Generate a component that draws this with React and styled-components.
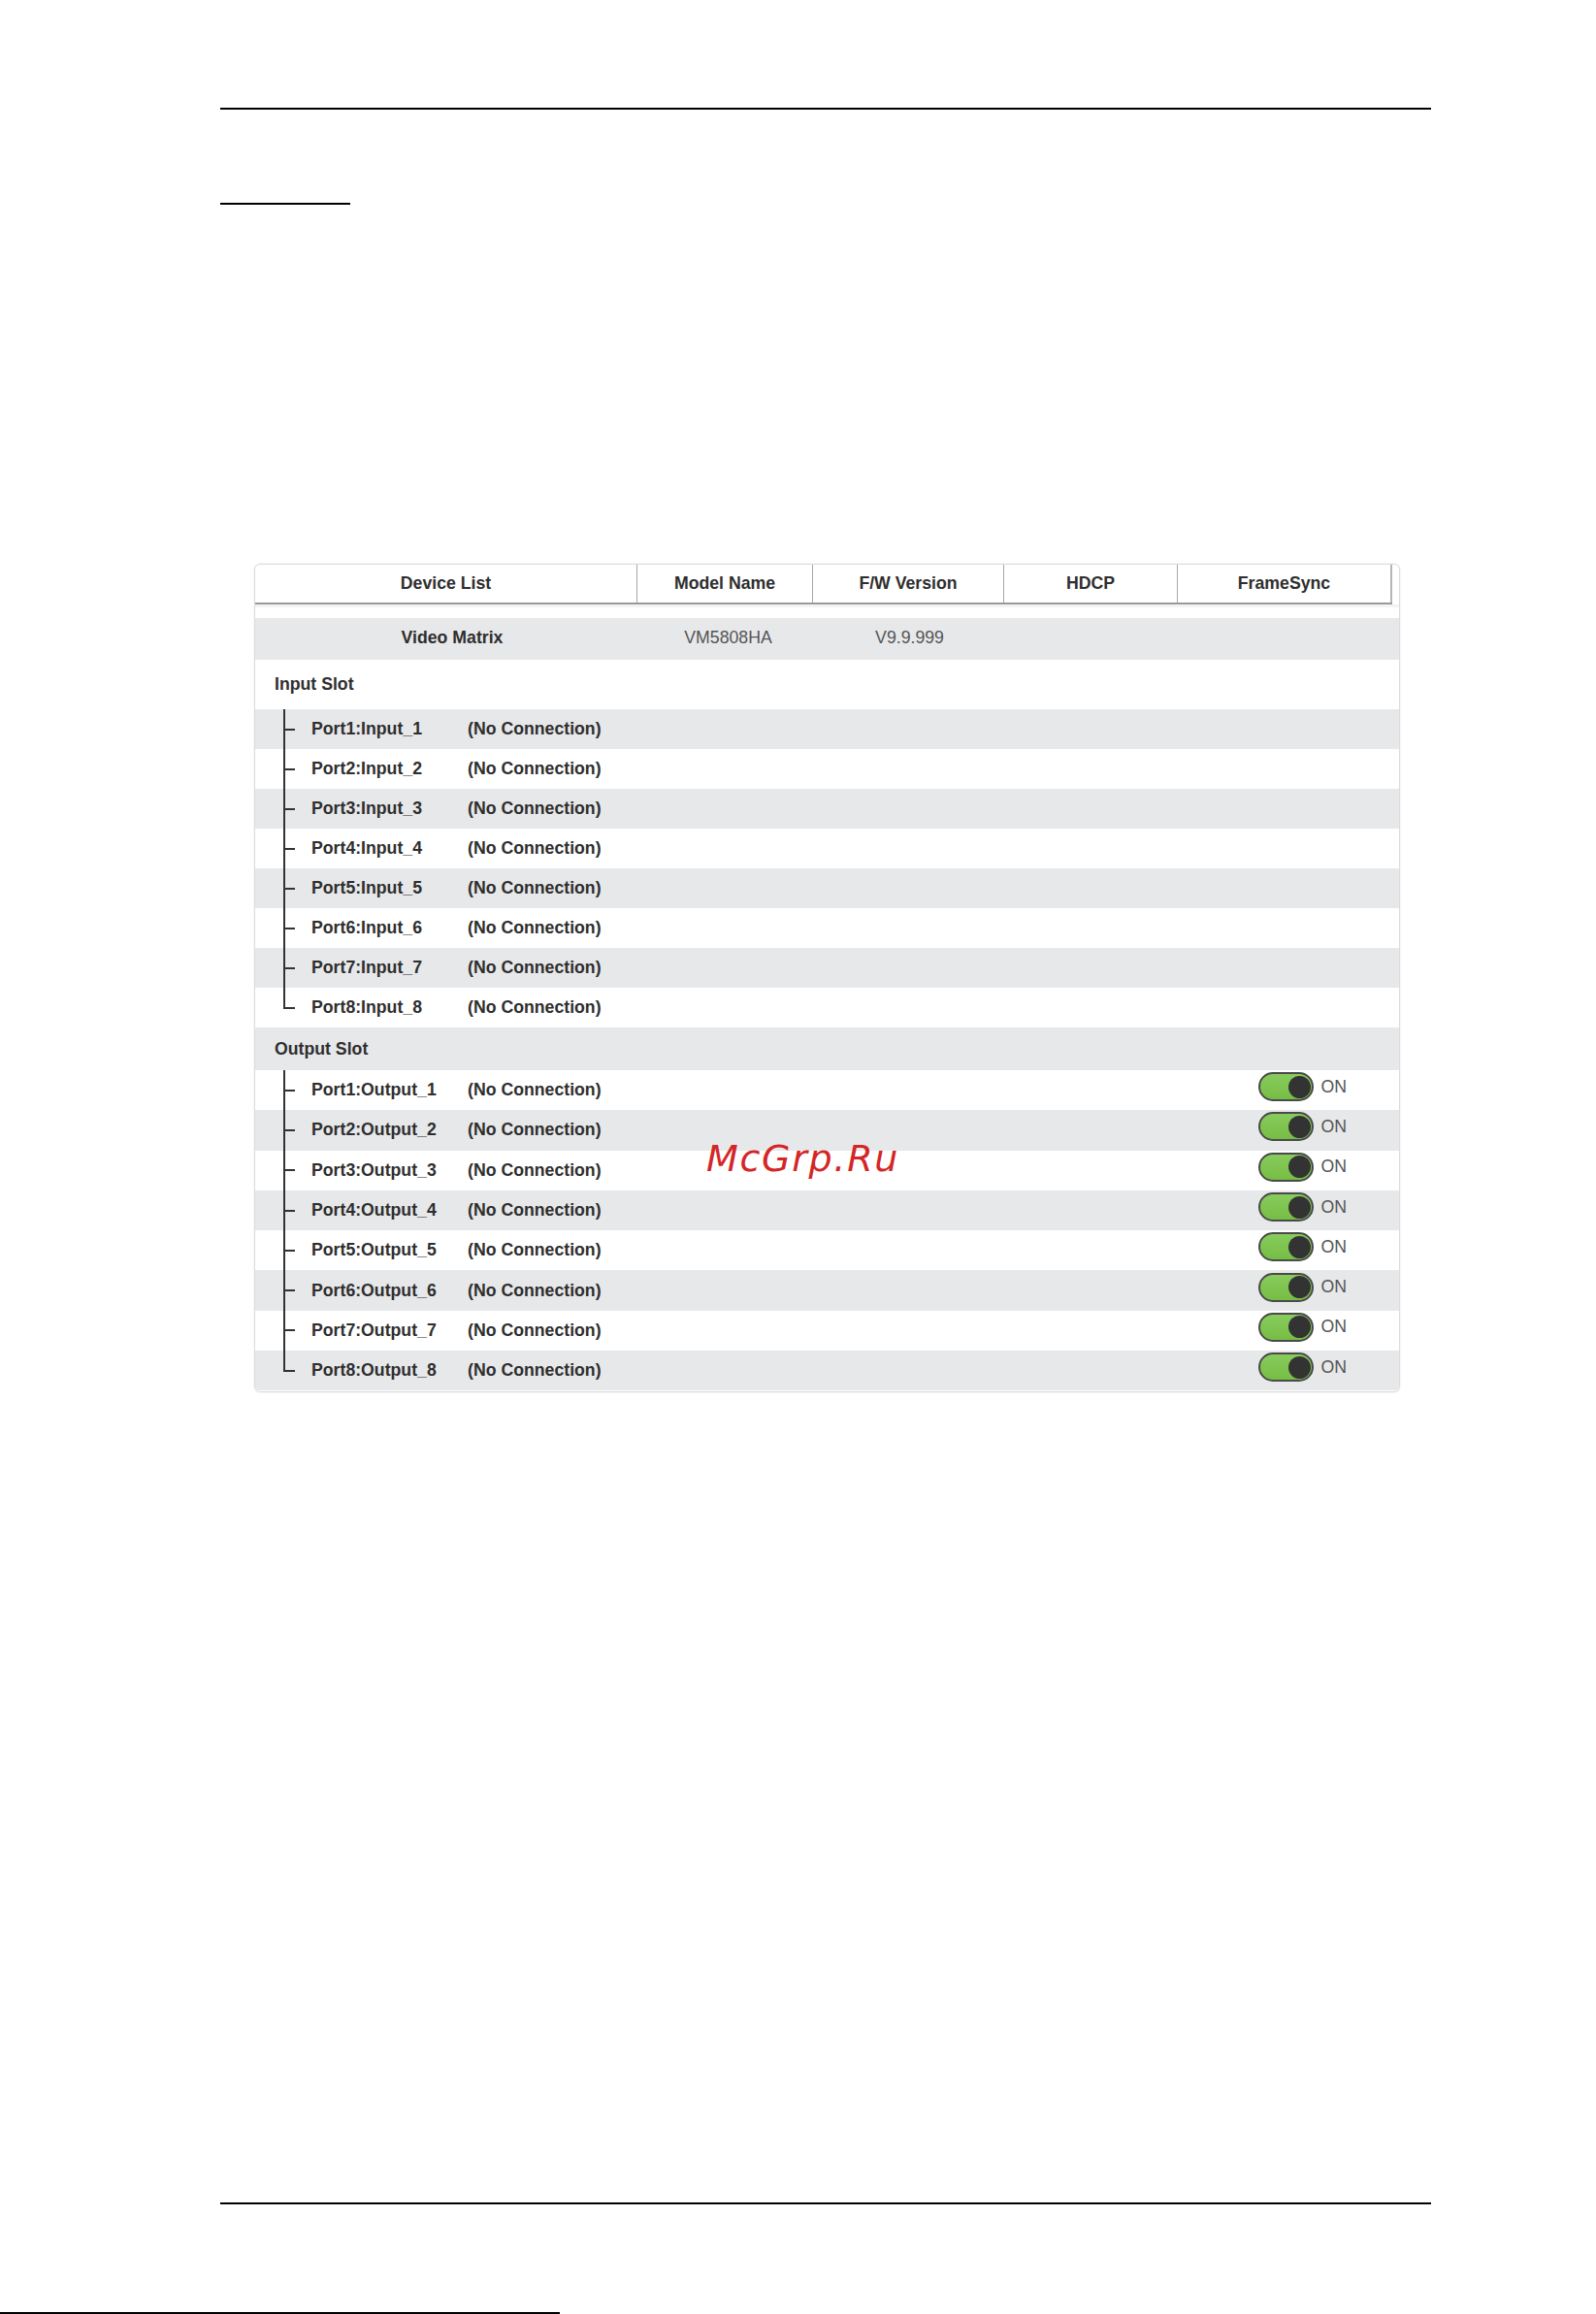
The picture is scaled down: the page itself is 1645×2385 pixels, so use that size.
import React from 'react'
import styled, { createGlobalStyle } from 'styled-components'

const GlobalStyle = createGlobalStyle`
  body {
    margin: 0;
    background: #fff;
    font-family: "Liberation Sans", Arial, sans-serif;
  }
`

const columns = '394px 181px 197px 179px 221px'

const inputs = [1, 2, 3, 4, 5, 6, 7, 8].map(n => ({ id: n, name: `Port${n}:Input_${n}` }))
const outputs = [1, 2, 3, 4, 5, 6, 7, 8].map(n => ({ id: n, name: `Port${n}:Output_${n}` }))

function App() {
    return (
        <>
            <GlobalStyle />
            <Page>
                <Rule />
                <ShortRule />
                <Panel>
                    <HeaderRow>
                        <HeadCell>Device List</HeadCell>
                        <HeadCell>Model Name</HeadCell>
                        <HeadCell>F/W Version</HeadCell>
                        <HeadCell>HDCP</HeadCell>
                        <HeadCell $last>FrameSync</HeadCell>
                    </HeaderRow>
                    <Gap />
                    <DeviceRow>
                        <DeviceCell $bold $shift={12}>Video Matrix</DeviceCell>
                        <DeviceCell $shift={6}>VM5808HA</DeviceCell>
                        <DeviceCell $shift={2}>V9.9.999</DeviceCell>
                        <DeviceCell />
                        <DeviceCell />
                    </DeviceRow>
                    <SlotRow $h={51}>Input Slot</SlotRow>
                    {inputs.map((p, i) => (
                        <PortRow key={p.id} $gray={i % 2 === 0} $h={41}>
                            <Tree $last={i === inputs.length - 1} />
                            <PortName>{p.name}</PortName>
                            <Conn>(No Connection)</Conn>
                        </PortRow>
                    ))}
                    <SlotRow $gray $h={44}>Output Slot</SlotRow>
                    {outputs.map((p, i) => (
                        <PortRow key={p.id} $gray={i % 2 === 1} $h={41.3}>
                            <Tree $last={i === outputs.length - 1} />
                            <PortName>{p.name}</PortName>
                            <Conn>(No Connection)</Conn>
                            <SyncCell>
                                <Switch><Knob /></Switch>
                                <OnLabel>ON</OnLabel>
                            </SyncCell>
                        </PortRow>
                    ))}
                </Panel>
                <Rule $bottom />
                <FootRule />
                <Watermark>McGrp.Ru</Watermark>
            </Page>
        </>
    )
}

export default App

const Page = styled.div`
    position: relative;
    width: 1645px;
    height: 2385px;
    overflow: hidden;
    display: flex;
    flex-direction: column;
`
const Rule = styled.div`
    margin-left: 227px;
    margin-top: ${p => (p.$bottom ? '835px' : '111px')};
    width: 1248px;
    height: 2px;
    background: #000;
`
const ShortRule = styled.div`
    margin-left: 227px;
    margin-top: 96px;
    width: 134px;
    height: 2px;
    background: #000;
`
const FootRule = styled.div`
    margin-top: 111px;
    width: 577px;
    height: 2px;
    background: #000;
`
const Panel = styled.div`
    margin-top: 370px;
    margin-left: 262px;
    width: 1179px;
    height: 853px;
    border: 1px solid #dcdcdc;
    border-radius: 6px;
    box-shadow: 0 0 2px rgba(0, 0, 0, 0.12);
    overflow: hidden;
    color: #2e2e2e;
    font-size: 17.7px;
`
const HeaderRow = styled.div`
    display: grid;
    grid-template-columns: ${columns};
    height: 39px;
    border-bottom: 2px solid #9a9a9a;
    width: 1172px;
`
const HeadCell = styled.div`
    display: flex;
    align-items: center;
    justify-content: center;
    font-weight: bold;
    border-right: ${p => (p.$last ? '2px solid #b5b5b5' : '1px solid #a8a8a8')};
`
const Gap = styled.div`
    height: 11px;
    border-top: 3px solid #f3f3f3;
`
const DeviceRow = styled.div`
    display: grid;
    grid-template-columns: ${columns};
    height: 43px;
    background: #e7e8ea;
`
const DeviceCell = styled.div`
    display: flex;
    align-items: center;
    justify-content: center;
    padding-bottom: 3px;
    padding-left: ${p => p.$shift || 0}px;
    font-weight: ${p => (p.$bold ? 'bold' : 'normal')};
    color: ${p => (p.$bold ? '#2e2e2e' : '#555')};
`
const SlotRow = styled.div`
    display: flex;
    align-items: center;
    height: ${p => p.$h}px;
    padding-left: 20px;
    font-weight: bold;
    background: ${p => (p.$gray ? '#e7e8ea' : '#fff')};
`
const PortRow = styled.div`
    display: flex;
    align-items: center;
    height: ${p => p.$h}px;
    padding-left: 29px;
    font-weight: bold;
    background: ${p => (p.$gray ? '#e7e8ea' : '#fff')};
`
const Tree = styled.span`
    position: relative;
    align-self: stretch;
    width: 29px;
    flex: none;
    &::before {
        content: '';
        position: absolute;
        left: 0;
        top: 0;
        bottom: ${p => (p.$last ? '50%' : '0')};
        width: 2px;
        background: #333;
    }
    &::after {
        content: '';
        position: absolute;
        left: 0;
        top: calc(50% - 1px);
        width: 12px;
        height: 2px;
        background: #333;
    }
`
const PortName = styled.span`
    width: 161px;
    flex: none;
`
const Conn = styled.span`
    flex: none;
`
const SyncCell = styled.div`
    margin-left: auto;
    margin-right: 54px;
    margin-bottom: 7px;
    display: flex;
    align-items: center;
    gap: 7px;
`
const Switch = styled.div`
    box-sizing: border-box;
    width: 57px;
    height: 30px;
    border: 2px solid #4a4a4a;
    border-radius: 15px;
    background: linear-gradient(180deg, #88cc5c 0%, #76bd45 100%);
    display: flex;
    align-items: center;
    justify-content: flex-end;
    padding-right: 1px;
`
const Knob = styled.div`
    width: 23px;
    height: 23px;
    border-radius: 50%;
    background: #333;
`
const OnLabel = styled.span`
    font-weight: normal;
    color: #555;
`
const Watermark = styled.div`
    position: absolute;
    left: 728px;
    top: 1175px;
    font-family: "DejaVu Sans", Verdana, sans-serif;
    font-style: italic;
    font-size: 38px;
    line-height: 1;
    letter-spacing: 1.7px;
    color: #d42626;
    pointer-events: none;
`
